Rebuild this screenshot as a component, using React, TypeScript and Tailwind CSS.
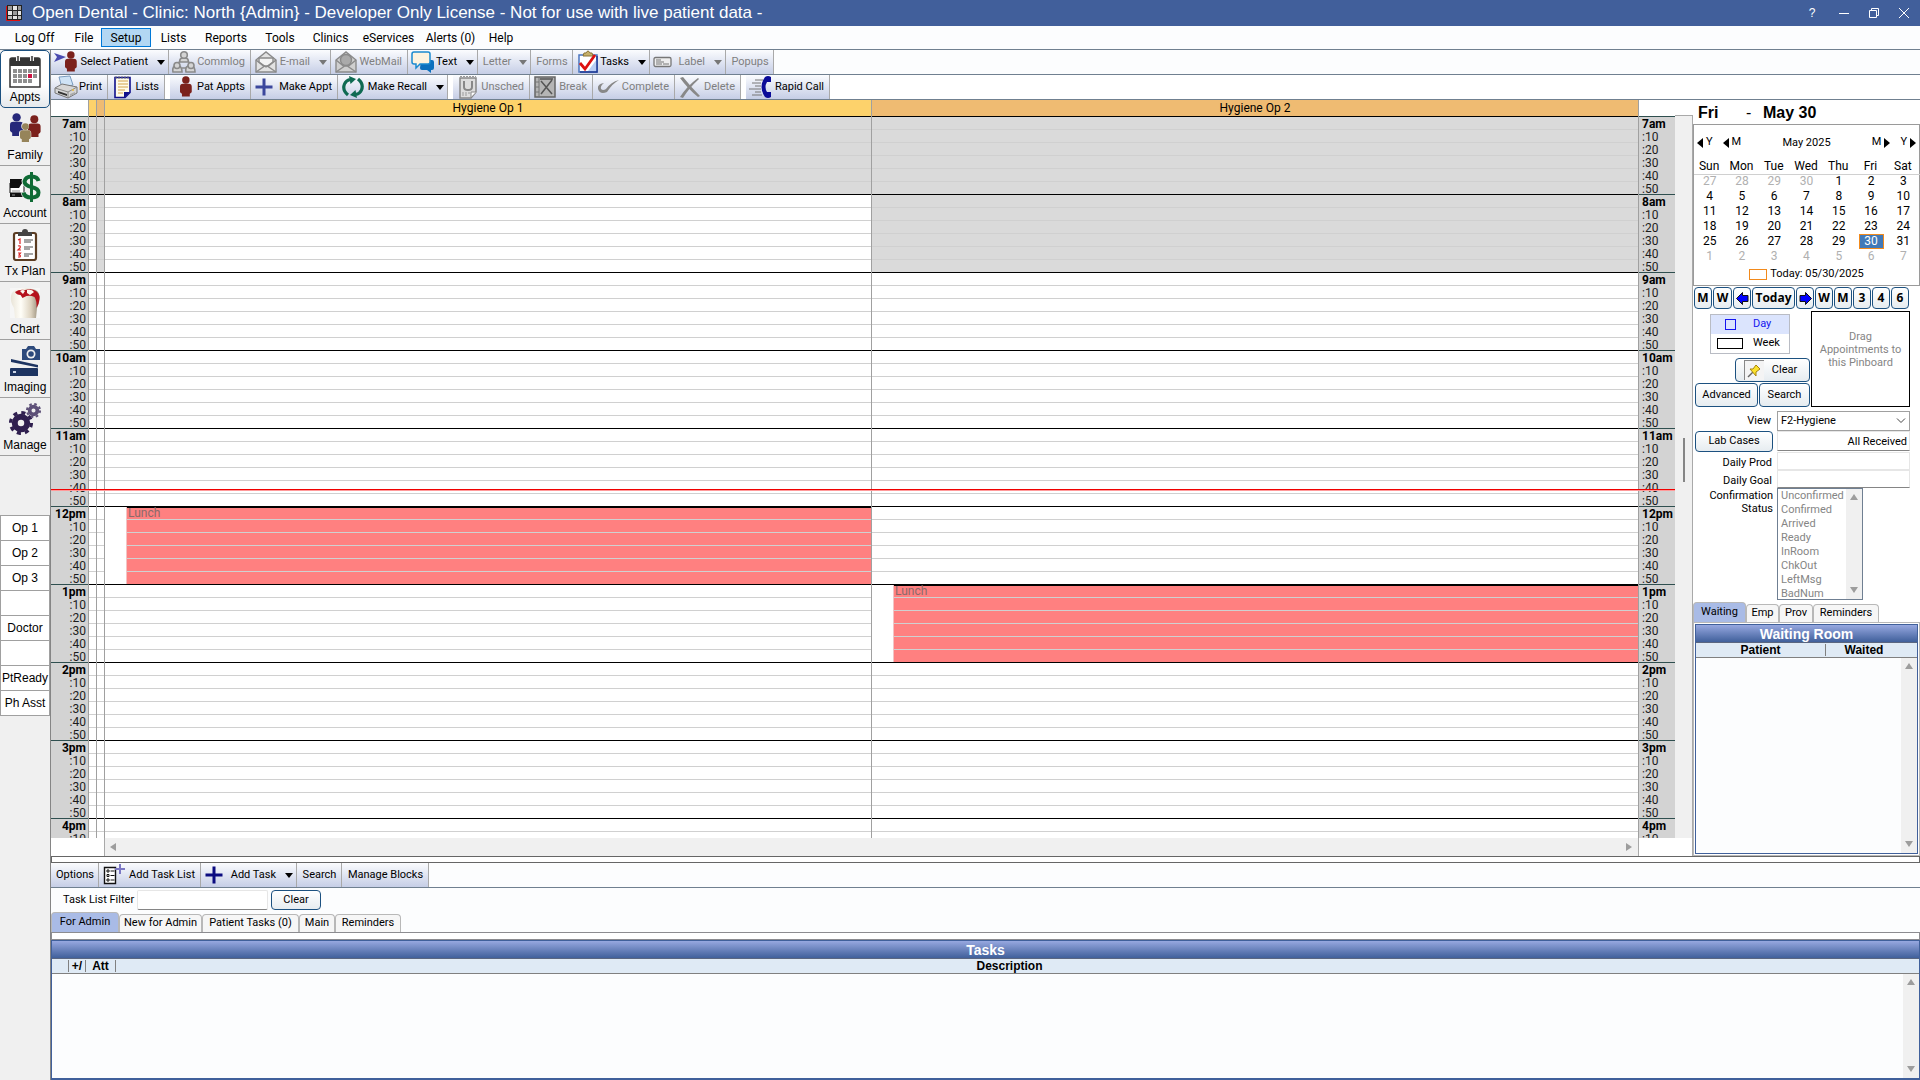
import React from "react";

type Kids = { children: React.ReactNode };

/* ---------- icons ---------- */

function Svg({ box = "0 0 24 24", className = "size-6", children }: Kids & { box?: string; className?: string }) {
  return (
    <svg viewBox={box} className={`shrink-0 ${className}`} aria-hidden="true">
      {children}
    </svg>
  );
}

const Person = ({ x = 0, y = 0, s = 1, fill = "#7b211c" }) => (
  <g transform={`translate(${x} ${y}) scale(${s})`} fill={fill}>
    <circle cx="6" cy="4" r="3.8" />
    <path d="M0 11q0-3 3-3h6q3 0 3 3v5q0 1-2 2v3H2v-3q-2-1-2-2z" />
  </g>
);

const Caret = ({ muted = false }) => (
  <Svg box="0 0 8 5" className="h-[5px] w-2">
    <path d="M0 0h8L4 5z" fill={muted ? "#777" : "#000"} />
  </Svg>
);

const Plus = ({ color = "#3b479c" }) => (
  <Svg className="size-5" box="0 0 20 20">
    <path d="M10 1.500v17M1.500 10h17" stroke={color} strokeWidth="3" />
  </Svg>
);

const icons: Record<string, React.ReactNode> = {
  patient: (
    <Svg>
      <path d="M0 3l12 4L0 12l3-5z" fill="#4a4bb0" />
      <Person x={11} y={1} s={0.98} />
    </Svg>
  ),
  commlog: (
    <Svg>
      <g fill="#d4d4d4" stroke="#8a8a8a" strokeWidth="1.600">
        <path d="M9 9l-4 7M15 9l4 7M10 18h4" />
        <path d="M8 12q-1-3 2-4h4q3 1 2 4zM1 22q-1-5 2-6h4q3 1 3 6zM14 22q-1-5 2-6h4q3 1 3 6z" />
        <circle cx="12" cy="5" r="3.300" />
        <circle cx="5" cy="15.500" r="3" />
        <circle cx="19" cy="15.500" r="3" />
      </g>
    </Svg>
  ),
  mail: (
    <Svg>
      <g fill="#e2e2e2" stroke="#8a8a8a" strokeWidth="1.400">
        <path d="M2 10L12 2l10 8v12H2z" />
        <path d="M5 12V8h14v4l-7 5z" fill="#f3f3f3" />
        <path d="M2 10l8 6.500L2 22M22 10l-8 6.500 8 5.500M9 16h6" fill="none" />
      </g>
    </Svg>
  ),
  webmail: (
    <Svg>
      <g fill="#cfcfcf" stroke="#8a8a8a" strokeWidth="1.400">
        <path d="M2 10L12 2l10 8v12H2z" />
        <circle cx="12" cy="10" r="5.500" fill="#aaa" />
        <path d="M2 10l8 6.500L2 22M22 10l-8 6.500 8 5.500M9 16h6" fill="none" />
      </g>
    </Svg>
  ),
  chat: (
    <Svg>
      <path d="M10 10h11q2 0 2 2v6q0 2-2 2h-1v3l-4-3h-5q-2 0-2-2z" fill="#0c70bd" />
      <path d="M3 2h14q2 0 2 2v8q0 2-2 2H9l-4 4v-4H3q-2 0-2-2V4q0-2 2-2z" fill="#fdf3df" stroke="#1b8ad0" strokeWidth="1.500" />
    </Svg>
  ),
  tasks: (
    <Svg>
      <path d="M3 5h18v17H3z" fill="#fff" stroke="#4a74c0" strokeWidth="1.500" />
      <path d="M12 21h9V9z" fill="#b9cdf4" />
      <path d="M21 6v16H4" stroke="#1f3a94" strokeWidth="1.500" fill="none" />
      <path d="M7 6l1-3h2q2-4 4 0h2l1 3z" fill="#c6b06a" stroke="#8a7436" />
      <path d="M4 13l5 6L19 5" fill="none" stroke="#dd1010" strokeWidth="2.800" />
    </Svg>
  ),
  label: (
    <Svg box="0 0 20 12" className="h-3 w-5">
      <rect x="1" y="1.500" width="17" height="9" rx="1.500" fill="#eee" stroke="#777" strokeWidth="1.300" />
      <path d="M3 4h5M3 6h8M3 8h6M10 8h6" stroke="#777" />
    </Svg>
  ),
  print: (
    <Svg>
      <path d="M5 2l11-1 3 9-11 3z" fill="#cfe3f6" stroke="#7a9cc0" />
      <path d="M1 13l7-4 15 3v6l-9 5-13-5z" fill="#d6d6d6" stroke="#777" />
      <path d="M1 13l13 4 9-5M14 17v6" fill="none" stroke="#888" />
      <path d="M4 16l9 3v2l-9-3z" fill="#333" />
      <path d="M16 19l5-2v2l-5 2z" fill="#aaa" />
      <circle cx="19" cy="15" r="1" fill="#e8b93c" />
    </Svg>
  ),
  list: (
    <Svg>
      <path d="M4 2.500h15v15l-5 5H4z" fill="#fffbe8" stroke="#10108c" strokeWidth="1.600" />
      <path d="M19 17l-6 6v-6z" fill="#10108c" />
      <path d="M7 6h10M7 9h10M7 12h10M7 15h7M7 18h5" stroke="#d3a24c" />
      <path d="M5 1v3M8 1v3M11 1v3M14 1v3M17 1v3" stroke="#777" />
    </Svg>
  ),
  person: (
    <Svg>
      <Person x={7} y={1} s={0.98} />
    </Svg>
  ),
  plus: <Plus />,
  recall: (
    <Svg>
      <path d="M7 20Q1 15 3.500 9 5 5.500 9 4.500" fill="none" stroke="#0f6a52" strokeWidth="3.200" />
      <path d="M8 1l7 3-5.500 5z" fill="#0f6a52" />
      <path d="M17 4q6 5 3.500 11-1.500 3.500-5.500 4.500" fill="none" stroke="#0f6a52" strokeWidth="3.200" />
      <path d="M16 23l-7-3 5.500-5z" fill="#0f6a52" />
    </Svg>
  ),
  unsched: (
    <Svg>
      <path d="M4 3h16v14l-5 6H4z" fill="#ddd" stroke="#888" strokeWidth="1.500" />
      <path d="M8 6v6q0 3 4 3t4-3V6" fill="none" stroke="#888" strokeWidth="2" />
      <path d="M6 18h8M6 20h6M4 1.500h16" stroke="#999" strokeDasharray="2 1" />
      <path d="M15 22v-5h5" fill="#fff" stroke="#888" />
    </Svg>
  ),
  break: (
    <Svg>
      <path d="M2 2h20v20H2z" fill="#b5b5b5" stroke="#666" strokeWidth="1.500" />
      <path d="M6 2v20M2 7h4M2 12h4M2 17h4" stroke="#777" />
      <path d="M8 6l11 13M19 5L8 19M7 4h13" stroke="#555" strokeWidth="1.500" />
    </Svg>
  ),
  complete: (
    <Svg>
      <path d="M23 5Q17 8 11 17 4 20 2 14q-1-5 6-6-4 3-3 6 2 2 5 0 5-7 13-9z" fill="#888" />
    </Svg>
  ),
  delete: (
    <Svg>
      <path d="M2 3l3-1q8 10 17 19l-2 1Q10 14 2 3z" fill="#888" />
      <path d="M20 3l1 1Q11 13 5 23l-3-1Q9 11 20 3z" fill="#888" />
    </Svg>
  ),
  phone: (
    <Svg>
      <path d="M6 5h8M3 8h9M6 11h6M0 14h12M6 17h6M3 20h10" stroke="#777" />
      <path d="M22 2v5h-4q-3 5 0 10h4v5q-3 2-6 0-7-10 0-20 3-2 6 0z" fill="#0b0b98" />
    </Svg>
  ),
  tasklist: (
    <Svg>
      <path d="M2.500 4.500h11v16h-11z" fill="#fff" stroke="#111" strokeWidth="1.400" />
      <path d="M5 7h2v2H5zM5 11.500h2v2H5zM5 16h2v2H5z" fill="none" stroke="#111" />
      <path d="M8.500 8h4M8.500 12.500h4M8.500 17h4" stroke="#111" />
      <path d="M18 1v10M13 6h10" stroke="#7c78c4" strokeWidth="2" />
    </Svg>
  ),
  addtask: <Plus color="#0b0b80" />,
};

const gear = (cx: number, cy: number, r: number, fill: string) => (
  <g>
    <circle cx={cx} cy={cy} r={r * 0.52} fill="none" stroke={fill} strokeWidth={r * 0.5} />
    <circle cx={cx} cy={cy} r={r * 0.87} fill="none" stroke={fill} strokeWidth={r * 0.27} strokeDasharray={`${r * 0.3416} ${r * 0.3416}`} />
  </g>
);

const moduleIcons: Record<string, React.ReactNode> = {
  Appts: (
    <Svg box="0 0 32 32" className="size-8">
      <path d="M1 4q0-2 2-2h26q2 0 2 2v27H1z" fill="#fff" stroke="#333" strokeWidth="1.500" />
      <path d="M1 10V4q0-2 2-2h26q2 0 2 2v6z" fill="#333" />
      <path d="M9 0v5M23 0v5" stroke="#f2f2f2" strokeWidth="4" />
      <path d="M9 0v5M23 0v5" stroke="#333" strokeWidth="1.500" />
      <path d="M4 15h24M4 20h24M4 25h19" stroke="#8f8f8f" strokeWidth="4" strokeDasharray="4 1" />
      <path d="M19 18h4v4h-4z" fill="#cc1040" />
    </Svg>
  ),
  Family: (
    <Svg box="0 0 32 32" className="size-8">
      <Person x={1} y={0} s={1.1} fill="#26287a" />
      <Person x={19} y={2} s={1.050} fill="#7b211c" />
      <Person x={10} y={9} s={1.020} fill="#f0f0f0" />
      <Person x={11} y={10} s={0.9} fill="#96845a" />
    </Svg>
  ),
  Account: (
    <Svg box="0 0 32 32" className="size-8">
      <path d="M1 8h15v4H1zM1 22h14v4H1z" fill="#111" />
      <path d="M1 12h14v10H1z" fill="#fff" stroke="#111" />
      <path d="M1 12h12l-3 5H1z" fill="#111" />
      <path d="M3 20h8M3 24h3" stroke="#999" />
      <path d="M29.500 9q-1-4-7-4t-7 5q0 4 7 5.500t7 5.500q0 5-7 5t-8-5M22.500 1v30" fill="none" stroke="#f0f0f0" strokeWidth="6" />
      <path d="M29.500 10q-1-4.500-7-4.500t-7 5q0 4 7 5.500t7 5.500q0 5-7 5t-8-5" fill="none" stroke="#0f6b35" strokeWidth="4" />
      <path d="M22.500 1v30" stroke="#0f6b35" strokeWidth="3" />
    </Svg>
  ),
  "Tx Plan": (
    <Svg box="0 0 32 32" className="size-8">
      <rect x="5" y="4" width="22" height="27" rx="2" fill="#fff" stroke="#5b3c22" strokeWidth="2.200" />
      <path d="M9 7V3h4q0-3 3-3t3 3h4v4z" fill="#444" />
      <path d="M15 11h9M15 13h7M15 18h9M15 20h6M15 25h9M15 27h5" stroke="#888" strokeWidth="1.300" />
      <path d="M9 11l2-1v5M9 17q3-1 2 2l-2 2h3M9 24h2.500l-1.500 2q2 0 1 2H9" fill="none" stroke="#d22" strokeWidth="1.200" />
    </Svg>
  ),
  Chart: (
    <Svg box="0 0 32 32" className="size-8">
      <defs>
        <linearGradient id="tooth" x1="0" x2="1" y1="0" y2="0">
          <stop offset="0" stopColor="#e9e4d8" />
          <stop offset="0.350" stopColor="#fffef8" />
          <stop offset="0.700" stopColor="#ddd3c0" />
          <stop offset="1" stopColor="#8f8471" />
        </linearGradient>
      </defs>
      <path d="M1 1h30v30H1z" fill="#f6f6f6" />
      <path d="M2 9Q3 3 9 2.500q7-2 14-.500 7 1 7.500 7 .500 6-2.500 12l-1 10H6L5 21Q1 15 2 9z" fill="url(#tooth)" />
      <path d="M6 5q4-3 10-2 7-2 11 1 4 3 3.500 8-.500 5-3 9 .500-7-2-11-4-2-8-1l-4 2-2-3q-4 0-5.500-3z" fill="#b5121c" />
      <path d="M11 4q3-2 5 0l-2 3zM18 3q5-1 7 2l-4 3-3-2z" fill="#fbf6ee" />
    </Svg>
  ),
  Imaging: (
    <Svg box="0 0 32 32" className="size-8">
      <path d="M13 4h4l2-3h6l2 3h4v11H13z" fill="#2d4a7c" />
      <circle cx="22" cy="9" r="4.500" fill="#f0f0f0" />
      <circle cx="22" cy="9" r="2.800" fill="#2d4a7c" />
      <path d="M2 14l27 6v2.500L2 17z" fill="#1d3461" />
      <path d="M1 24q0-1 1-1h26q1 0 1 1v7H1z" fill="#1d3461" />
      <path d="M4 26h3v2H4z" fill="#cdd7e8" />
    </Svg>
  ),
  Manage: (
    <Svg box="0 0 32 32" className="size-8">
      {gear(12, 20, 12, "#2f1f4f")}
      {gear(24.5, 7.5, 7.5, "#5d5078")}
    </Svg>
  ),
};

/* ---------- small pieces ---------- */

type Tool = { label: string; w: string; icon?: string; caret?: boolean; muted?: boolean; gap?: boolean };

function ToolButton({ t }: { t: Tool }) {
  return (
    <button
      className={`flex h-6 shrink-0 items-center border-r border-[#a9a9a9] bg-linear-to-b from-[#fbfcfe] to-[#c6cee6] pl-[3px] ${t.w} ${
        t.gap ? "ml-[5px]" : ""
      } ${t.muted ? "text-[#7f7f7f]" : "text-black"}`}
    >
      {t.icon && icons[t.icon]}
      <span className={`flex-1 whitespace-nowrap ${t.icon ? "pr-[5px] text-right" : "pr-[2px] text-center"}`}>{t.label}</span>
      {t.caret && (
        <span className="flex w-[15px] shrink-0 justify-start pl-1">
          <Caret muted={t.muted} />
        </span>
      )}
    </button>
  );
}

const row1: Tool[] = [
  { label: "Select Patient", w: "w-[118px]", icon: "patient", caret: true },
  { label: "Commlog", w: "w-[82px]", icon: "commlog", muted: true },
  { label: "E-mail", w: "w-[80px]", icon: "mail", caret: true, muted: true },
  { label: "WebMail", w: "w-[77px]", icon: "webmail", muted: true },
  { label: "Text", w: "w-[70px]", icon: "chat", caret: true },
  { label: "Letter", w: "w-[53px]", caret: true, muted: true },
  { label: "Forms", w: "w-[42px]", muted: true },
  { label: "Tasks", w: "w-[77px]", icon: "tasks", caret: true },
  { label: "Label", w: "w-[76px]", icon: "label", caret: true, muted: true },
  { label: "Popups", w: "w-[48px]", muted: true },
];

const row2: Tool[] = [
  { label: "Print", w: "w-[57px]", icon: "print" },
  { label: "Lists", w: "w-[57px]", icon: "list" },
  { label: "Pat Appts", w: "w-[81px]", icon: "person", gap: true },
  { label: "Make Appt", w: "w-[87px]", icon: "plus" },
  { label: "Make Recall", w: "w-[110px]", icon: "recall", caret: true },
  { label: "Unsched", w: "w-[77px]", icon: "unsched", muted: true, gap: true },
  { label: "Break", w: "w-[63px]", icon: "break", muted: true },
  { label: "Complete", w: "w-[82px]", icon: "complete", muted: true },
  { label: "Delete", w: "w-[66px]", icon: "delete", muted: true },
  { label: "Rapid Call", w: "w-[84px]", icon: "phone", gap: true },
];

const taskTools: Tool[] = [
  { label: "Options", w: "w-[48px]" },
  { label: "Add Task List", w: "w-[102px]", icon: "tasklist" },
  { label: "Add Task", w: "w-[96px]", icon: "addtask", caret: true },
  { label: "Search", w: "w-[45px]" },
  { label: "Manage Blocks", w: "w-[87px]" },
];

function OdButton({ className = "", children }: Kids & { className?: string }) {
  return (
    <button
      className={`flex shrink-0 items-center justify-center rounded-[4px] border border-[#1c5180] bg-linear-to-b from-white to-[#e6ecf0] whitespace-nowrap ${className}`}
    >
      {children}
    </button>
  );
}

function Arrow({ dir }: { dir: "up" | "down" | "left" | "right" }) {
  const d = { up: "M4 0l4 6H0z", down: "M0 1h8L4 7z", left: "M6 0v8L0 4z", right: "M1 0l6 4-6 4z" }[dir];
  return (
    <Svg box="0 0 8 8" className="size-2">
      <path d={d} fill="#9d9d9d" />
    </Svg>
  );
}

function VScroll() {
  return (
    <div className="flex w-4 shrink-0 flex-col items-center justify-between bg-[#f0f0f0] py-[5px]">
      <Arrow dir="up" />
      <Arrow dir="down" />
    </div>
  );
}

function Tab({ label, active = false, w }: { label: string; active?: boolean; w: string }) {
  return (
    <button
      className={`shrink-0 rounded-t-[4px] border border-b-0 border-[#b8b8b8] whitespace-nowrap ${w} ${
        active ? "h-5 bg-[#a9bbe6]" : "h-[18px] bg-[#f6f6f6]"
      }`}
    >
      {label}
    </button>
  );
}

function GridTitle({ children }: Kids) {
  return (
    <h2 className="flex h-[18px] shrink-0 items-center justify-center border-b border-[#5a6680] bg-linear-to-b from-[#97a8e0] to-[#40609b] font-['Liberation_Sans'] text-sm font-bold text-white">
      {children}
    </h2>
  );
}

/* ---------- schedule ---------- */

const hours = ["7am", "8am", "9am", "10am", "11am", "12pm", "1pm", "2pm", "3pm", "4pm"];
const tens = ["", ":10", ":20", ":30", ":40", ":50"];

function TimeCol({ right = false }: { right?: boolean }) {
  return (
    <div className={`shrink-0 bg-[#d3d3d3] ${right ? "w-9 text-left" : "w-[37px] text-right"}`}>
      {hours.map((h) => (
        <div key={h} className={`h-[78px] border-t border-[#2f4f4f] ${right ? "pl-[3px]" : "pr-[2px]"}`}>
          {tens.map((t) => (
            <div key={t} className={`h-[13px] leading-[14px] whitespace-nowrap ${t ? "text-[#1c1c1c]" : "font-bold"}`}>
              {t || h}
            </div>
          ))}
        </div>
      ))}
    </div>
  );
}

function OpCol({ closed, lunch = "", className = "" }: { closed: string[]; lunch?: string; className?: string }) {
  return (
    <div className={`border-l border-[#a0a0a0] ${className}`}>
      {hours.map((h) => (
        <div key={h} className={`h-[78px] border-t border-black ${closed.includes(h) ? "bg-[#dadada]" : "bg-white"}`}>
          <div className={lunch === h ? "ml-[21px] border-l border-[#f3c4c4] bg-[#ff8080]" : ""}>
            {tens.map((t, i) => (
              <div
                key={t}
                className={`text-[#8a6a6a] ${
                  i === 0 ? (lunch === h ? "h-3 border-t border-black" : "h-3") : "h-[13px] border-t border-[#d0d0d0]"
                }`}
              >
                {i === 0 && lunch === h ? <span className="block pl-px leading-[11px]">Lunch</span> : null}
              </div>
            ))}
          </div>
        </div>
      ))}
    </div>
  );
}

function Schedule() {
  return (
    <main className="flex min-w-0 flex-1 flex-col bg-white text-xs">
      <div className="flex min-h-0 flex-1">
        <div className="flex min-w-0 flex-1 flex-col">
          <div className="flex h-4 shrink-0 text-center leading-4">
            <div className="w-[37px] shrink-0" />
            <div className="w-2 shrink-0 border-l border-[#a0a0a0] bg-[#fdd26b]" />
            <div className="w-2 shrink-0 border-l border-[#a0a0a0] bg-[#efbb72]" />
            <div className="flex-1 border-l border-[#a0a0a0] bg-[#fdd26b]">Hygiene Op 1</div>
            <div className="flex-1 border-x border-[#a0a0a0] bg-[#efbb72]">Hygiene Op 2</div>
            <div className="w-9 shrink-0" />
          </div>
          <div className="relative flex h-0 min-h-0 flex-1 overflow-hidden">
            <TimeCol />
            <OpCol closed={["7am"]} className="w-2 shrink-0" />
            <OpCol closed={["7am", "8am"]} className="w-2 shrink-0" />
            <OpCol closed={["7am"]} lunch="12pm" className="flex-1" />
            <OpCol closed={["7am", "8am"]} lunch="1pm" className="flex-1 border-r" />
            <TimeCol right />
            <div className="absolute inset-x-0 top-[373px] h-0.5 border-t border-[#f00000] bg-[#ff9a9a]" />
          </div>
        </div>
        <div className="mt-[15px] flex w-[18px] shrink-0 justify-center border-t border-r border-[#a9a9a9] bg-[#f0f0f0]">
          <div className="mt-[322px] h-11 w-0.5 bg-[#858585]" />
        </div>
      </div>
      <div className="flex h-[18px] shrink-0">
        <div className="w-[53px] shrink-0" />
        <div className="flex flex-1 items-center justify-between border-x border-[#a9a9a9] bg-[#f0f0f0] px-[5px]">
          <Arrow dir="left" />
          <Arrow dir="right" />
        </div>
        <div className="w-[54px] shrink-0 border-r border-[#a9a9a9]" />
      </div>
    </main>
  );
}

/* ---------- right panel ---------- */

const weeks = [
  [27, 28, 29, 30, 1, 2, 3],
  [4, 5, 6, 7, 8, 9, 10],
  [11, 12, 13, 14, 15, 16, 17],
  [18, 19, 20, 21, 22, 23, 24],
  [25, 26, 27, 28, 29, 30, 31],
  [1, 2, 3, 4, 5, 6, 7],
];

function CalArrow({ dir }: { dir: "l" | "r" }) {
  return (
    <Svg box="0 0 6 10" className="h-[10px] w-1.5">
      <path d={dir === "l" ? "M6 0v10L0 5z" : "M0 0v10l6-5z"} fill="#000" />
    </Svg>
  );
}

function Calendar() {
  return (
    <section className="flex h-[162px] shrink-0 flex-col border border-[#9a9a9a] bg-white">
      <div className="flex h-[35px] items-center px-[3px]">
        <button className="flex items-center gap-[3px]">
          <CalArrow dir="l" />Y
        </button>
        <button className="ml-[10px] flex items-center gap-[3px]">
          <CalArrow dir="l" />M
        </button>
        <span className="flex-1 pt-0.5 text-center">May 2025</span>
        <button className="flex items-center gap-[3px]">
          M<CalArrow dir="r" />
        </button>
        <button className="ml-[10px] flex items-center gap-[3px]">
          Y<CalArrow dir="r" />
        </button>
      </div>
      <table className="w-[226px] table-fixed border-collapse text-center text-xs">
        <thead>
          <tr className="h-[14px] border-b border-[#d0d0d0] leading-[13px]">
            {["Sun", "Mon", "Tue", "Wed", "Thu", "Fri", "Sat"].map((d) => (
              <th key={d} className="p-0 pr-0.5 font-normal">{d}</th>
            ))}
          </tr>
        </thead>
        <tbody>
          {weeks.map((w, r) => (
            <tr key={r} className="h-[15px] leading-[13px]">
              {w.map((d) => {
                const off = (r === 0 && d > 20) || r === 5;
                const today = r === 4 && d === 30;
                return (
                  <td key={d} className={`p-0 pr-px ${off ? "text-[#b0b0b0]" : ""}`}>
                    {today ? <span className="mx-auto block w-[25px] border border-[#f28a1c] bg-[#4179b8] text-white">{d}</span> : d}
                  </td>
                );
              })}
            </tr>
          ))}
        </tbody>
      </table>
      <div className="flex flex-1 items-center justify-center gap-[3px]">
        <span className="h-[11px] w-[18px] border border-[#f28a1c]" />
        Today: 05/30/2025
      </div>
    </section>
  );
}

const BlueArrow = ({ flip = false }) => (
  <Svg box="0 0 13 13" className={flip ? "size-[13px] rotate-180" : "size-[13px]"}>
    <path d="M.500 6.500l6-6v3h5.500v6H6.500v3z" fill="#0000ff" stroke="#111" />
  </Svg>
);

const statuses = ["Unconfirmed", "Confirmed", "Arrived", "Ready", "InRoom", "ChkOut", "LeftMsg", "BadNum"];
const box = "border border-[#e6e6e6] border-b-[#858585] bg-white";

function RightPanel() {
  return (
    <aside className="flex w-[227px] shrink-0 flex-col bg-white">
      <h1 className="flex h-6 shrink-0 items-center pt-0.5 pl-[5px] font-['Liberation_Sans'] text-base leading-none font-bold">
        <span className="w-12">Fri</span>
        <span className="w-[17px] font-normal">-</span>
        May 30
      </h1>
      <Calendar />
      <div className="mt-px flex h-[22px] shrink-0 gap-px pl-px font-['Open_Sans'] text-xs font-bold">
        <OdButton className="w-[18px]">M</OdButton>
        <OdButton className="w-[19px]">W</OdButton>
        <OdButton className="w-[18px]"><BlueArrow /></OdButton>
        <OdButton className="w-[43px]">Today</OdButton>
        <OdButton className="w-[18px]"><BlueArrow flip /></OdButton>
        <OdButton className="w-[18px]">W</OdButton>
        <OdButton className="w-[18px]">M</OdButton>
        <OdButton className="w-[18px]">3</OdButton>
        <OdButton className="w-[18px]">4</OdButton>
        <OdButton className="w-[18px]">6</OdButton>
      </div>
      <div className="mt-0.5 mb-1 flex h-24 shrink-0 gap-px pr-[10px] pl-0.5">
        <div className="flex w-[115px] flex-col items-end pt-[3px]">
          <div className="mr-5 w-20 border border-[#b9bcc4]">
            <button className="flex h-[19px] w-full items-center bg-[#dbe4fd] text-[#1515f0]">
              <span className="flex w-[38px] justify-center"><span className="size-[11px] border border-current" /></span>
              <span className="ml-1">Day</span>
            </button>
            <button className="flex h-[19px] w-full items-center">
              <span className="flex w-[38px] justify-center"><span className="h-[11px] w-[26px] border border-black" /></span>
              <span className="ml-1">Week</span>
            </button>
          </div>
          <OdButton className="mt-1 h-6 w-[75px] gap-2">
            <span className="-ml-1 flex size-5 items-center justify-center border-t border-l border-[#888] bg-[#f4f4f4]">
              <Svg box="0 0 16 16" className="size-4">
                <path d="M2 14l5-5" stroke="#666" strokeWidth="1.500" />
                <path d="M4 6l3 0 3-4 4 4-4 3 0 4z" fill="#fbe22c" stroke="#a8840c" />
              </Svg>
            </span>
            Clear
          </OdButton>
          <div className="mt-px flex gap-px">
            <OdButton className="h-6 w-[63px]">Advanced</OdButton>
            <OdButton className="h-6 w-[51px]">Search</OdButton>
          </div>
        </div>
        <div className="flex-1 border border-black px-1 pt-[18px] text-center leading-[13px] text-[#858585]">Drag Appointments to this Pinboard</div>
      </div>
      <div className="grid shrink-0 grid-cols-[80px_1fr] gap-x-1 pr-[10px] text-right">
        <label htmlFor="view" className="pr-[2px] leading-5">View</label>
        <div className="relative h-5">
          <select id="view" className="h-5 w-full appearance-none border border-[#a0a0a0] bg-white pl-[3px]">
            <option>F2-Hygiene</option>
          </select>
          <Svg box="0 0 10 6" className="pointer-events-none absolute top-[7px] right-1 h-1.5 w-2.5">
            <path d="M1 .500l4 4 4-4" fill="none" stroke="#444" />
          </Svg>
        </div>
        <OdButton className="ml-0.5 h-[21px]">Lab Cases</OdButton>
        <input aria-label="Lab cases" readOnly value="All Received" className={`h-5 w-full pr-[2px] text-right ${box}`} />
        <label htmlFor="prod" className="h-[18px] pr-px leading-[22px]">Daily Prod</label>
        <input id="prod" className="h-[18px] w-full border border-[#e6e6e6]" />
        <label htmlFor="goal" className="h-[18px] pr-px leading-[22px]">Daily Goal</label>
        <input id="goal" className={`h-[18px] w-full ${box}`} />
        <label htmlFor="status" className="pt-px leading-[13px]">Confirmation<br />Status</label>
        <div id="status" role="listbox" className="flex h-[112px] w-[86px] overflow-hidden border border-[#6f7f92] text-left text-[#858585]">
          <ul className="flex-1 pl-[3px] leading-[14px]">
            {statuses.map((s) => (
              <li key={s} role="option" aria-selected="false">{s}</li>
            ))}
          </ul>
          <VScroll />
        </div>
      </div>
      <div className="mt-0.5 flex h-5 shrink-0 items-end">
        <Tab label="Waiting" active w="w-[53px]" />
        <Tab label="Emp" w="w-[33px]" />
        <Tab label="Prov" w="w-[34px]" />
        <Tab label="Reminders" w="w-[66px]" />
      </div>
      <div className="flex min-h-0 flex-1 flex-col border border-[#b8b8b8] p-px">
        <section className="flex flex-1 flex-col border border-[#40609b] bg-[#fcfdfe]">
          <GridTitle>Waiting Room</GridTitle>
          <div className="flex h-[15px] shrink-0 items-center border-b border-[#808080] bg-[#dfeaf5] text-center font-['Liberation_Sans'] text-xs font-bold">
            <span className="w-[130px] border-r border-[#808080] leading-3">Patient</span>
            <span className="w-[76px] leading-3">Waited</span>
          </div>
          <div className="flex flex-1 justify-end"><VScroll /></div>
        </section>
      </div>
    </aside>
  );
}

/* ---------- task area ---------- */

function TaskArea() {
  return (
    <section className="flex h-[224px] shrink-0 flex-col">
      <div className="h-[7px] shrink-0 border border-[#666] bg-white" />
      <div className="flex shrink-0 border-b border-[#708090]">
        {taskTools.map((t) => <ToolButton key={t.label} t={t} />)}
      </div>
      <div className="flex h-[22px] shrink-0 items-end pl-3">
        <label htmlFor="filter" className="w-[74px] leading-5 whitespace-nowrap">Task List Filter</label>
        <input id="filter" className={`h-5 w-[131px] rounded-[2px] ${box}`} />
        <OdButton className="ml-[3px] h-5 w-[50px]">Clear</OdButton>
      </div>
      <div className="flex h-[22px] shrink-0 items-end">
        <Tab label="For Admin" active w="w-[68px]" />
        <Tab label="New for Admin" w="w-[83px]" />
        <Tab label="Patient Tasks (0)" w="w-[97px]" />
        <Tab label="Main" w="w-[36px]" />
        <Tab label="Reminders" w="w-[66px]" />
      </div>
      <div className="h-2 shrink-0 border border-[#8c8c90] bg-white" />
      <div className="flex min-h-0 flex-1 flex-col border border-b-2 border-[#40609b] bg-[#fcfdfe]">
        <GridTitle>Tasks</GridTitle>
        <div className="flex h-[15px] shrink-0 items-center border-b border-[#808080] bg-[#dfeaf5] text-center font-['Liberation_Sans'] text-xs font-bold">
          <span className="h-3 w-[17px] border-r border-[#808080]" />
          <span className="w-[17px] border-r border-[#808080] leading-3">+/</span>
          <span className="w-[30px] border-r border-[#808080] leading-3">Att</span>
          <span className="flex-1 pr-4 leading-3">Description</span>
        </div>
        <div className="flex flex-1 justify-end"><VScroll /></div>
      </div>
    </section>
  );
}

/* ---------- page ---------- */

const menus: [string, string][] = [
  ["Log Off", "w-[65px]"],
  ["File", "w-[34px]"],
  ["Setup", "w-[50px]"],
  ["Lists", "w-[45px]"],
  ["Reports", "w-[60px]"],
  ["Tools", "w-[48px]"],
  ["Clinics", "w-[53px]"],
  ["eServices", "w-[63px]"],
  ["Alerts (0)", "w-[61px]"],
  ["Help", "w-[40px]"],
];

const quick = ["Op 1", "Op 2", "Op 3", "", "Doctor", "", "PtReady", "Ph Asst"];

export default function App() {
  return (
    <div className="flex h-screen flex-col overflow-hidden bg-[#fcfdfe] font-['Roboto',sans-serif] text-[11px] text-black">
      <header className="flex h-[26px] shrink-0 items-center bg-[#415f9b] pl-[6px] font-['Liberation_Sans'] text-[17px] text-white">
        <Svg box="0 0 16 16" className="size-4">
          <path d="M1 0h15v15H1z" fill="#222" />
          <path d="M2 1h4v4H2zM7 6h4v4H7zM12 1h3v4h-3z" fill="#999" />
          <path d="M7 1h4v4H7zM2 6h4v4H2zM12 6h3v4h-3zM7 11h4v3H7z" fill="#e6e6e6" />
          <path d="M2 11h4v3H2zM12 11h3v3h-3z" fill="#bbb" />
          <path d="M.500 1v14.500H14" fill="none" stroke="#e01010" />
        </Svg>
        <span className="ml-[10px] flex-1 whitespace-nowrap">Open Dental - Clinic: North {"{Admin}"} - Developer Only License - Not for use with live patient data -</span>
        <div className="flex text-xs">
          <button className="w-8">?</button>
          <button aria-label="Minimize" className="flex w-8 items-center justify-center">
            <Svg box="0 0 10 10" className="size-2.5"><path d="M0 5.500h10" stroke="#fff" /></Svg>
          </button>
          <button aria-label="Restore" className="flex w-7 items-center justify-center">
            <Svg box="0 0 10 10" className="size-2.5"><path d="M.500 2.500h7v7h-7zM2.500 2.500v-2h7v7h-2" fill="none" stroke="#fff" /></Svg>
          </button>
          <button aria-label="Close" className="flex w-8 items-center justify-center">
            <Svg box="0 0 10 10" className="size-2.5"><path d="M0 0l10 10M10 0L0 10" stroke="#fff" /></Svg>
          </button>
        </div>
      </header>
      <nav className="flex h-6 shrink-0 items-center border-b border-[#708090] pl-0.5 text-xs">
        {menus.map(([m, w]) => (
          <button
            key={m}
            className={`flex h-[19px] shrink-0 items-center justify-center whitespace-nowrap ${w} ${
              m === "Setup" ? "border border-[#0078d7] bg-[#b3d7f3]" : ""
            }`}
          >
            {m}
          </button>
        ))}
      </nav>
      <div className="flex min-h-0 flex-1">
        <aside className="flex w-[51px] shrink-0 flex-col border-r border-[#858585] bg-[#f0f0f0] font-['Liberation_Sans'] text-xs">
          {Object.keys(moduleIcons).map((m) => (
            <button
              key={m}
              className={`flex h-[58px] shrink-0 flex-col items-center justify-between pt-[5px] pb-0.5 leading-4 ${
                m === "Appts" ? "rounded-[5px] border border-[#1c5180] bg-linear-to-b from-white from-60% to-[#e6e9ec]" : "border-b border-[#a0a0a0]"
              }`}
            >
              {moduleIcons[m]}
              {m}
            </button>
          ))}
          <div className="mt-[59px] border-t border-[#a0a0a0]">
            {quick.map((q, i) => (
              <button key={i} className="flex h-[25px] w-full items-center justify-center border-x border-b border-[#a0a0a0] bg-white whitespace-nowrap">
                {q}
              </button>
            ))}
          </div>
        </aside>
        <div className="flex min-w-0 flex-1 flex-col">
          <div className="flex shrink-0 border-b border-[#708090]">{row1.map((t) => <ToolButton key={t.label} t={t} />)}</div>
          <div className="flex shrink-0 border-b border-[#708090] bg-white">{row2.map((t) => <ToolButton key={t.label} t={t} />)}</div>
          <div className="flex min-h-0 flex-1">
            <Schedule />
            <RightPanel />
          </div>
          <TaskArea />
        </div>
      </div>
    </div>
  );
}
